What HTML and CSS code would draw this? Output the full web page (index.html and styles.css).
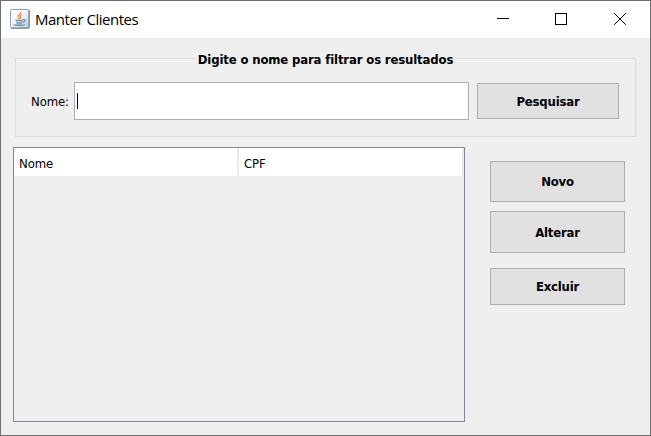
FILE: index.html
```html
<!DOCTYPE html>
<html lang="pt-BR">
<head>
<meta charset="utf-8">
<title>Manter Clientes</title>
<link rel="stylesheet" href="styles.css">
</head>
<body>
<div class="window">
  <header class="titlebar">
    <svg class="app-icon" width="20" height="20" viewBox="0 0 20 20">
      <defs><linearGradient id="tile" x1="0" y1="0" x2="1" y2="1"><stop offset="0" stop-color="#fff"/><stop offset=".5" stop-color="#eef2f6"/><stop offset="1" stop-color="#bccbd8"/></linearGradient></defs>
      <rect x=".5" y=".5" width="18.6" height="18.6" rx="1.5" fill="url(#tile)" stroke="#8fa3b3"/>
      <path d="M1 19.1h18M19.1 1v18" stroke="#637c90"/>
      <path d="M10.700 3c.8 2-3 2.700-2.600 4.800.1 1 .9 1.500 1.200 2.400M11.600 5.700c-2.200 1.300-1.100 2.300-.9 3.300.1.600-.3 1-.7 1.400" fill="none" stroke="#e58a45" stroke-width="1.300"/>
      <path d="M5.500 10.900c1.500.8 6 .7 7.700 0M6.200 12.800c1.600.7 4.700.7 6.300 0M6.700 14.400c1.500.6 3.800.6 5 0M13 10.500c2.600-.7 2.600 2.100-.2 2.900M4 15.300c-.7 1.500 9.500 1.500 10.800.1" fill="none" stroke="#6589a8" stroke-width="1.100"/>
    </svg>
    <h1 class="title">Manter Clientes</h1>
    <svg class="controls" width="129" height="14" viewBox="0 0 129 14" fill="none" stroke="#000">
      <path d="M0 6.500h12" shape-rendering="crispEdges"/>
      <path d="M58.500 1.500h11v11h-11z" shape-rendering="crispEdges"/>
      <path d="M117.200 1.200l11.600 11.600M128.800 1.200l-11.600 11.600"/>
    </svg>
  </header>
  <main class="content">
    <section class="filter">
      <div class="legend"><span class="legend-text">Digite o nome para filtrar os resultados</span></div>
      <div class="filter-row">
        <label class="label">Nome:</label>
        <div class="input"><span class="caret"></span></div>
        <button class="button search">Pesquisar</button>
      </div>
    </section>
    <div class="lower">
      <div class="table">
        <div class="table-head"><div class="cell">Nome</div><div class="cell last">CPF</div></div>
      </div>
      <div class="actions">
        <button class="button new">Novo</button>
        <button class="button edit">Alterar</button>
        <button class="button delete">Excluir</button>
      </div>
    </div>
  </main>
</div>
</body>
</html>
```
FILE: styles.css
```css
* { box-sizing: border-box; }
body { margin: 0; }
.window {
  width: 651px;
  height: 436px;
  border: 1px solid #6e6e6e;
  background: #efefef;
  color: #000;
  font: 13px "DejaVu Sans Condensed", "DejaVu Sans", sans-serif;
  font-stretch: condensed;
  letter-spacing: -0.1px;
  overflow: hidden;
}
.titlebar {
  display: flex;
  align-items: center;
  height: 37px;
  padding: 0 24px 0 9px;
  background: #fff;
}
.app-icon { margin-top: -2px; }
.title {
  margin: -1px 0 0 5px;
  font: 15px "Open Sans", "Noto Sans", sans-serif;
  letter-spacing: -0.48px;
  white-space: nowrap;
}
.controls { margin-left: auto; margin-top: -1px; }
.content { padding: 20px 14px 0 12px; }
.filter {
  height: 79px;
  margin-left: 2px;
  border: 1px solid #dcdcdc;
}
.legend {
  display: flex;
  justify-content: center;
  height: 23px;
  margin-top: -9px;
}
.legend-text {
  height: 20px;
  padding: 0 2px;
  background: #efefef;
  font-weight: bold;
  letter-spacing: -0.15px;
  line-height: 20px;
  white-space: nowrap;
}
.filter-row {
  display: flex;
  align-items: center;
  height: 38px;
  margin-top: 9px;
  padding-left: 15px;
}
.label { width: 43px; }
.input {
  width: 395px;
  height: 38px;
  padding: 10px 2px;
  border: 1px solid #abadb3;
  background: #fff;
}
.caret { display: block; width: 1px; height: 16px; background: #000; }
.button {
  padding: 0;
  border: 1px solid #adadad;
  background: #e1e1e1;
  color: #000;
  font: bold 13px "DejaVu Sans Condensed", "DejaVu Sans", sans-serif;
  font-stretch: condensed;
  letter-spacing: -0.2px;
}
.search { width: 142px; height: 36px; margin-left: 8px; }
.lower { display: flex; margin-top: 10px; }
.table {
  width: 452px;
  height: 275px;
  border: 1px solid #828790;
}
.table-head { display: flex; width: 449px; height: 28px; background: #fff; }
.cell {
  width: 225px;
  padding-left: 5px;
  border-right: 2px solid #ebebec;
  line-height: 31px;
}
.cell.last { width: 224px; border-right: 1px solid #e3e4e6; }
.actions {
  display: flex;
  flex-direction: column;
  width: 135px;
  margin: 14px 0 0 25px;
}
.new { height: 41px; }
.edit { height: 42px; margin-top: 9px; }
.delete { height: 37px; margin-top: 15px; }
```
